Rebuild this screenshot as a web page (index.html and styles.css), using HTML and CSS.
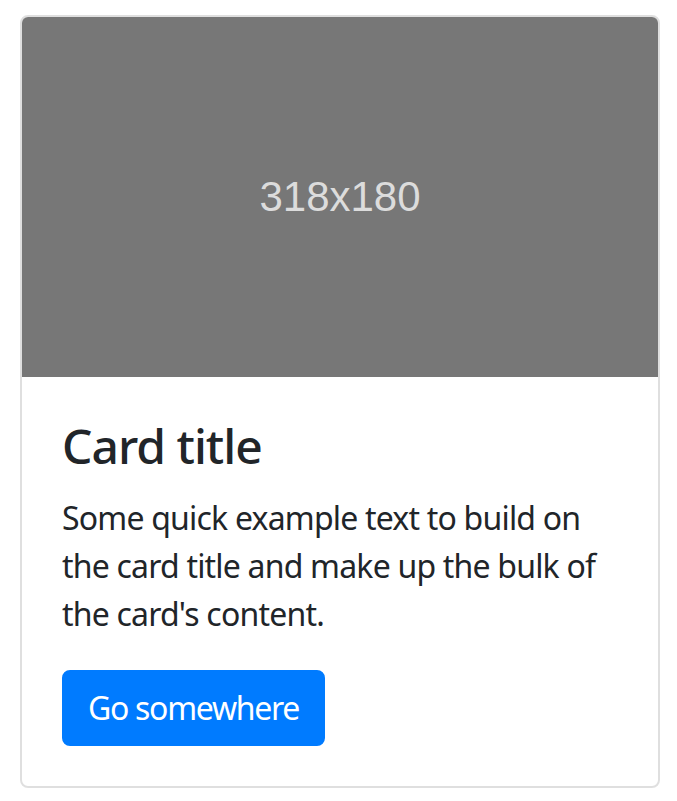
FILE: index.html
```html
<!DOCTYPE html>
<html lang="en">
<head>
<meta charset="utf-8">
<title>Card</title>
<link rel="stylesheet" href="styles.css">
</head>
<body>
<div class="card">
  <div class="card-img">
    <span class="card-img-label">318x180</span>
  </div>
  <div class="card-body">
    <h5 class="card-title">Card title</h5>
    <p class="card-text">Some quick example text to build on the card title and make up the bulk of the card's content.</p>
    <a href="#" class="btn">Go somewhere</a>
  </div>
</div>
</body>
</html>
```
FILE: styles.css
```css
html, body {
  margin: 0;
  padding: 0;
  background: #fff;
}
body {
  padding: 15px 0 0 20px;
  font-family: "Noto Sans", "Open Sans", sans-serif;
  font-size: 32px;
  line-height: 1.5;
  letter-spacing: -0.8px;
  color: #212529;
}
.card {
  width: 640px;
  box-sizing: border-box;
  border: 2px solid rgba(0, 0, 0, 0.125);
  border-radius: 8px;
  overflow: hidden;
  display: flex;
  flex-direction: column;
}
.card-img {
  height: 360px;
  background: #777;
  display: flex;
  align-items: center;
  justify-content: center;
}
.card-img-label {
  font-family: "Liberation Sans", Arial, sans-serif;
  font-size: 42px;
  letter-spacing: 0;
  color: #dcdcdc;
  line-height: 1;
}
.card-body {
  padding: 40px;
  display: flex;
  flex-direction: column;
  align-items: flex-start;
}
.card-title {
  margin: 0 0 19px;
  font-size: 48px;
  font-weight: 500;
  letter-spacing: -1px;
  line-height: 1.2;
}
.card-text {
  margin: 0 0 32px;
}
.btn {
  display: inline-block;
  padding: 12px 24px;
  border: 2px solid #007bff;
  border-radius: 8px;
  background: #007bff;
  color: #fff;
  text-decoration: none;
  letter-spacing: -1.3px;
  line-height: 1.5;
}
```
